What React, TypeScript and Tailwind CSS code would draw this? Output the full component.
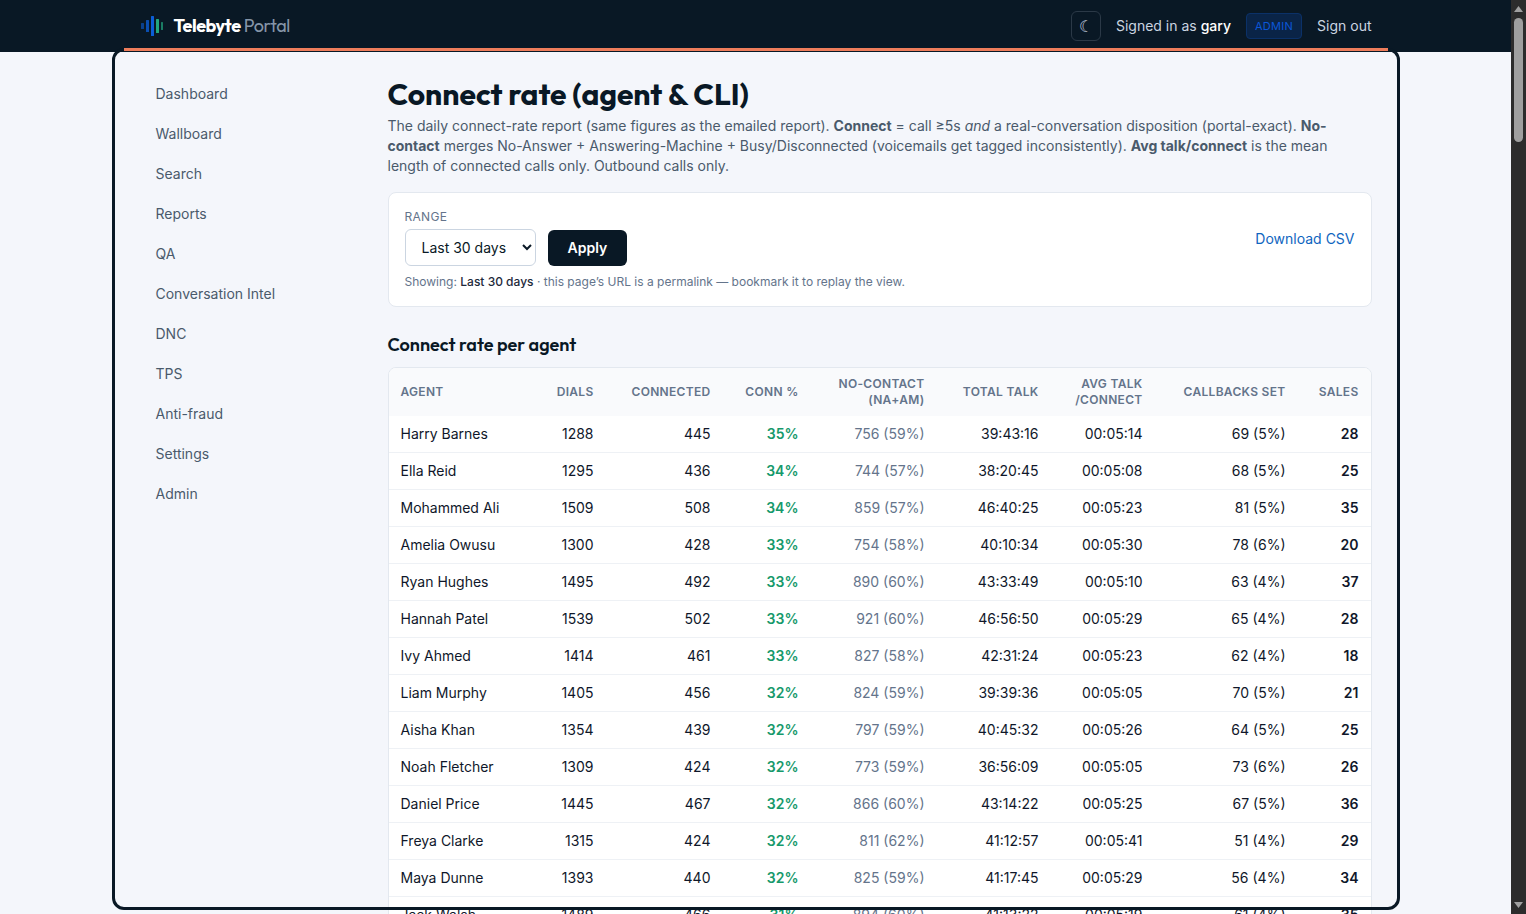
type AgentRow = {
    agent: string;
    dials: number;
    connected: number;
    rate: string;
    noContact: string;
    totalTalk: string;
    avgTalk: string;
    callbacks: string;
    sales: number;
};

const navItems = ["Dashboard", "Wallboard", "Search", "Reports", "QA", "Conversation Intel", "DNC", "TPS", "Anti-fraud", "Settings", "Admin"];

const columns = [
    { label: "Agent", width: "w-[143px]" },
    { label: "Dials", width: "w-[74px]" },
    { label: "Connected", width: "w-[117px]" },
    { label: "Conn %", width: "w-[88px]" },
    { label: "No-contact (NA+AM)", width: "w-[126px]" },
    { label: "Total talk", width: "w-[114px]" },
    { label: "Avg talk /connect", width: "w-[104px]" },
    { label: "Callbacks set", width: "w-[143px]" },
    { label: "Sales", width: "w-[73px]" },
];

const rows: AgentRow[] = [
    { agent: "Harry Barnes", dials: 1288, connected: 445, rate: "35%", noContact: "756 (59%)", totalTalk: "39:43:16", avgTalk: "00:05:14", callbacks: "69 (5%)", sales: 28 },
    { agent: "Ella Reid", dials: 1295, connected: 436, rate: "34%", noContact: "744 (57%)", totalTalk: "38:20:45", avgTalk: "00:05:08", callbacks: "68 (5%)", sales: 25 },
    { agent: "Mohammed Ali", dials: 1509, connected: 508, rate: "34%", noContact: "859 (57%)", totalTalk: "46:40:25", avgTalk: "00:05:23", callbacks: "81 (5%)", sales: 35 },
    { agent: "Amelia Owusu", dials: 1300, connected: 428, rate: "33%", noContact: "754 (58%)", totalTalk: "40:10:34", avgTalk: "00:05:30", callbacks: "78 (6%)", sales: 20 },
    { agent: "Ryan Hughes", dials: 1495, connected: 492, rate: "33%", noContact: "890 (60%)", totalTalk: "43:33:49", avgTalk: "00:05:10", callbacks: "63 (4%)", sales: 37 },
    { agent: "Hannah Patel", dials: 1539, connected: 502, rate: "33%", noContact: "921 (60%)", totalTalk: "46:56:50", avgTalk: "00:05:29", callbacks: "65 (4%)", sales: 28 },
    { agent: "Ivy Ahmed", dials: 1414, connected: 461, rate: "33%", noContact: "827 (58%)", totalTalk: "42:31:24", avgTalk: "00:05:23", callbacks: "62 (4%)", sales: 18 },
    { agent: "Liam Murphy", dials: 1405, connected: 456, rate: "32%", noContact: "824 (59%)", totalTalk: "39:39:36", avgTalk: "00:05:05", callbacks: "70 (5%)", sales: 21 },
    { agent: "Aisha Khan", dials: 1354, connected: 439, rate: "32%", noContact: "797 (59%)", totalTalk: "40:45:32", avgTalk: "00:05:26", callbacks: "64 (5%)", sales: 25 },
    { agent: "Noah Fletcher", dials: 1309, connected: 424, rate: "32%", noContact: "773 (59%)", totalTalk: "36:56:09", avgTalk: "00:05:05", callbacks: "73 (6%)", sales: 26 },
    { agent: "Daniel Price", dials: 1445, connected: 467, rate: "32%", noContact: "866 (60%)", totalTalk: "43:14:22", avgTalk: "00:05:25", callbacks: "67 (5%)", sales: 36 },
    { agent: "Freya Clarke", dials: 1315, connected: 424, rate: "32%", noContact: "811 (62%)", totalTalk: "41:12:57", avgTalk: "00:05:41", callbacks: "51 (4%)", sales: 29 },
    { agent: "Maya Dunne", dials: 1393, connected: 440, rate: "32%", noContact: "825 (59%)", totalTalk: "41:17:45", avgTalk: "00:05:29", callbacks: "56 (4%)", sales: 34 },
    { agent: "Jack Walsh", dials: 1489, connected: 466, rate: "31%", noContact: "894 (60%)", totalTalk: "41:13:22", avgTalk: "00:05:19", callbacks: "61 (4%)", sales: 35 },
];

function Logo() {
    return (
        <svg width="24" height="22" viewBox="0 0 24 22" aria-hidden="true">
            <rect x="1" y="8" width="3" height="6" rx="0.5" fill="#0b5ed7" opacity="0.6" />
            <rect x="6" y="5" width="3" height="12" rx="0.5" fill="#0b5ed7" opacity="0.8" />
            <rect x="11" y="1" width="3" height="20" rx="0.5" fill="#0b5ed7" />
            <rect x="16" y="4" width="3" height="14" rx="0.5" fill="#22a77f" />
            <rect x="21" y="7" width="2" height="8" rx="0.5" fill="#22a77f" opacity="0.7" />
        </svg>
    );
}

function Header() {
    return (
        <header className="shrink-0 bg-[#091825]">
            <div className="mx-auto flex h-[52px] max-w-7xl items-center justify-between px-6">
                <a href="#" className="flex items-center gap-2.5 font-[Outfit,Lato,sans-serif] text-lg tracking-tight text-[#8595a8]">
                    <Logo />
                    <span><b className="font-bold text-white">Telebyte</b> Portal</span>
                </a>
                <div className="flex items-center gap-[15px] text-sm text-[#cbd5e1]">
                    <button type="button" aria-label="Toggle dark mode" className="flex size-[30px] items-center justify-center rounded-md border border-[#2b3947] text-base">☾</button>
                    <span>Signed in as <span className="font-medium text-white">gary</span></span>
                    <span className="rounded border border-[#0b3168] bg-[#0a2447] px-2 py-1 text-[11px] leading-4 tracking-wide text-[#0b57d8]">ADMIN</span>
                    <a href="#">Sign out</a>
                </div>
            </div>
        </header>
    );
}

function Sidebar() {
    return (
        <nav className="flex w-[216px] shrink-0 flex-col gap-1">
            {navItems.map((item) => (
                <a key={item} href="#" className="px-4 py-2 text-sm text-[#4a5a6b]">{item}</a>
            ))}
        </nav>
    );
}

function RangeCard() {
    return (
        <form className="mt-4 flex items-start justify-between rounded-lg border border-[#e3e8ef] bg-white p-4" onSubmit={(e) => e.preventDefault()}>
            <div>
                <label htmlFor="range" className="mb-1 block text-xs tracking-wide text-[#64748b] uppercase">Range</label>
                <div className="flex items-center gap-3">
                    <select id="range" defaultValue="30" className="h-[37px] w-[131px] rounded-md border border-[#cbd5e1] bg-white pl-3 text-sm text-[#0a1926]">
                        <option value="30">Last 30 days</option>
                        <option value="7">Last 7 days</option>
                    </select>
                    <button type="submit" className="h-9 rounded-md bg-[#091825] px-5 text-sm font-semibold text-white">Apply</button>
                </div>
                <p className="mt-2 text-xs text-[#64748b]">
                    Showing: <span className="font-medium text-[#1e293b]">Last 30 days</span> · this page’s URL is a permalink — bookmark it to replay the view.
                </p>
            </div>
            <a href="#" className="mt-5 text-sm text-[#0f65c0]">Download CSV</a>
        </form>
    );
}

function AgentTable() {
    return (
        <div className="mt-2 overflow-hidden rounded-lg border border-[#e3e8ef] bg-white">
            <table className="w-full table-fixed border-separate border-spacing-0 text-right text-sm whitespace-nowrap text-[#0f172a]">
                <thead className="bg-[#f9fafc] text-xs tracking-wide text-[#64748b] uppercase">
                    <tr>
                        {columns.map((col) => (
                            <th key={col.label} scope="col" className={`${col.width} h-12 px-3 font-semibold whitespace-normal first:text-left`}>{col.label}</th>
                        ))}
                    </tr>
                </thead>
                <tbody className="[&_td]:border-b [&_td]:border-[#eef1f5] [&_td]:px-3 [&_td]:py-2">
                    {rows.map((row) => (
                        <tr key={row.agent}>
                            <td className="text-left">{row.agent}</td>
                            <td>{row.dials}</td>
                            <td>{row.connected}</td>
                            <td className="font-semibold text-[#16996b]">{row.rate}</td>
                            <td className="text-[#64748b]">{row.noContact}</td>
                            <td>{row.totalTalk}</td>
                            <td>{row.avgTalk}</td>
                            <td>{row.callbacks}</td>
                            <td className="font-semibold">{row.sales}</td>
                        </tr>
                    ))}
                </tbody>
            </table>
        </div>
    );
}

function Scrollbar() {
    return (
        <div className="flex w-[15px] shrink-0 flex-col items-center bg-[#2c2c2c] py-1.5" aria-hidden="true">
            <svg width="9" height="6" viewBox="0 0 9 6"><path d="M4.5 0 9 6H0z" fill="#a0a0a0" /></svg>
            <div className="mt-1.5 h-[124px] w-[9px] rounded-full bg-[#9f9f9f]" />
            <svg className="mt-auto" width="9" height="6" viewBox="0 0 9 6"><path d="M4.5 6 0 0h9z" fill="#a0a0a0" /></svg>
        </div>
    );
}

export default function App() {
    return (
        <div className="flex h-screen overflow-hidden bg-[#f4f6fb] font-[Inter,sans-serif]">
            <div className="relative flex min-w-0 flex-1 flex-col overflow-hidden">
                <Header />
                <main className="mx-auto flex w-full max-w-7xl gap-8 p-6">
                    <Sidebar />
                    <div className="min-w-0 flex-1">
                        <h1 className="mb-1 font-[Outfit,Lato,sans-serif] text-3xl font-bold text-[#091825]">Connect rate (agent &amp; CLI)</h1>
                        <p className="max-w-[960px] text-sm text-[#4a5a6b]">
                            The daily connect-rate report (same figures as the emailed report). <b className="font-bold">Connect</b> = call ≥5s <em>and</em> a real-conversation disposition (portal-exact). <b className="font-bold">No-contact</b> merges No-Answer + Answering-Machine + Busy/Disconnected (voicemails get tagged inconsistently). <b className="font-bold">Avg talk/connect</b> is the mean length of connected calls only. Outbound calls only.
                        </p>
                        <RangeCard />
                        <h2 className="mt-6 font-[Outfit,Lato,sans-serif] text-lg font-semibold text-[#091825]">Connect rate per agent</h2>
                        <AgentTable />
                    </div>
                </main>
                {/* focus frame around the main region */}
                <div className="pointer-events-none absolute inset-x-0 top-12 bottom-1 mx-auto max-w-[1288px] rounded-xl border-[3px] border-[#091825]" />
                <div className="absolute inset-x-0 top-12 mx-auto h-[3px] max-w-[1264px] bg-[#ee7d5b]" />
            </div>
            <Scrollbar />
        </div>
    );
}
